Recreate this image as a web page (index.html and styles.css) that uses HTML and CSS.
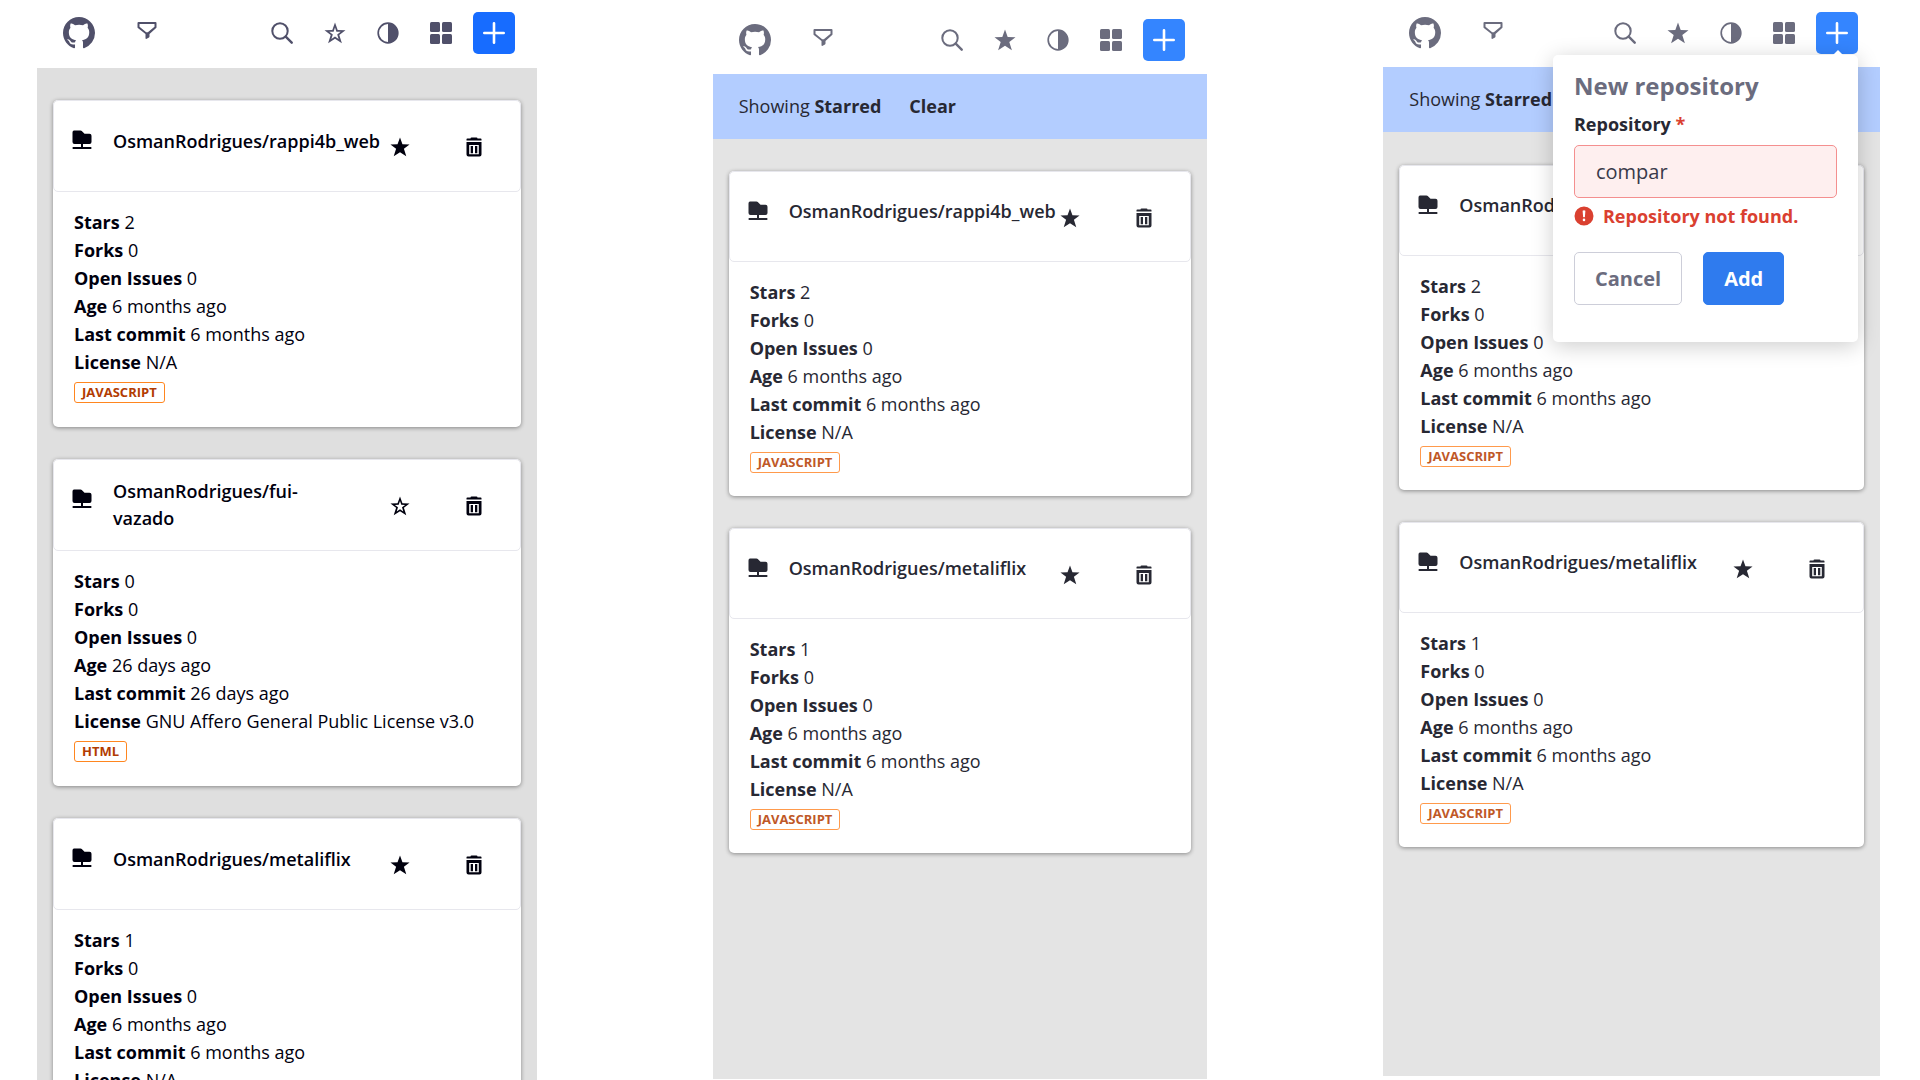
FILE: index.html
```html
<!DOCTYPE html>
<html lang="en">
<head>
<meta charset="utf-8">
<meta name="viewport" content="width=device-width, initial-scale=1">
<title>Repositories</title>
<link rel="stylesheet" href="styles.css">
</head>
<body>
<svg class="sprite" aria-hidden="true">
  <symbol id="github" viewBox="0 0 16 16"><path d="M8 0C3.58 0 0 3.58 0 8c0 3.54 2.29 6.53 5.47 7.59.4.07.55-.17.55-.38 0-.19-.01-.82-.01-1.49-2.01.37-2.53-.49-2.69-.94-.09-.23-.48-.94-.82-1.13-.28-.15-.68-.52-.01-.53.63-.01 1.08.58 1.23.82.72 1.21 1.87.87 2.33.66.07-.52.28-.87.51-1.07-1.78-.2-3.64-.89-3.64-3.95 0-.87.31-1.59.82-2.15-.08-.2-.36-1.02.08-2.12 0 0 .67-.21 2.2.82.64-.18 1.32-.27 2-.27s1.36.09 2 .27c1.53-1.04 2.2-.82 2.2-.82.44 1.1.16 1.92.08 2.12.51.56.82 1.27.82 2.15 0 3.07-1.87 3.75-3.65 3.95.29.25.54.73.54 1.48 0 1.07-.01 1.93-.01 2.2 0 .21.15.46.55.38A8.01 8.01 0 0 0 16 8c0-4.42-3.58-8-8-8z"/></symbol>
  <symbol id="filter" viewBox="0 0 22 22"><path fill-rule="evenodd" d="M1.5 0h17a1 1 0 0 1 1 1v4.200a1 1 0 0 1-.35.750L12.500 12v2.600a1 1 0 0 1-.5.850l-2.300 1.400a.800.800 0 0 1-1.200-.700V12L.850 5.950a1 1 0 0 1-.35-.750V1a1 1 0 0 1 1-1zM2.500 2v2.700L9.200 10.200h1.600l6.700-5.500V2z"/></symbol>
  <symbol id="search" viewBox="0 0 22 22"><circle cx="9" cy="9" r="7.700" fill="none" stroke="currentColor" stroke-width="2"/><path d="M14.700 14.700l6 6" stroke="currentColor" stroke-width="2.400" stroke-linecap="round"/></symbol>
  <symbol id="star" viewBox="0 0 22 22"><path d="M11 .5l2.700 7.500 7.800.2-6.200 4.800 2.600 8.300L11 16.800l-6.900 4.500L6.700 13 .5 8.200 8.300 8z"/></symbol>
  <symbol id="star-o" viewBox="0 0 22 22"><path fill-rule="evenodd" d="M11 .5l2.700 7.500 7.800.2-6.200 4.800 2.600 8.300L11 16.800l-6.900 4.500L6.700 13 .5 8.200 8.300 8zM11 5.500L9.600 9.700l-4.300.1 3.500 2.700-1.400 4.500 3.600-2.400 3.600 2.400-1.400-4.500 3.500-2.700-4.300-.1z"/></symbol>
  <symbol id="contrast" viewBox="0 0 22 22"><circle cx="11" cy="11" r="9.800" fill="none" stroke="currentColor" stroke-width="1.700"/><path d="M11 1.200a9.800 9.800 0 0 1 0 19.600z"/></symbol>
  <symbol id="cards" viewBox="0 0 22 22"><rect width="10" height="10" rx="1.500"/><rect x="12" width="10" height="10" rx="1.500"/><rect y="12" width="10" height="10" rx="1.500"/><rect x="12" y="12" width="10" height="10" rx="1.500"/></symbol>
  <symbol id="plus" viewBox="0 0 22 22"><path d="M11 1.300v19.400M1.300 11h19.400" stroke="currentColor" stroke-width="2.600" stroke-linecap="round"/></symbol>
  <symbol id="repo" viewBox="0 0 20 20"><path d="M2 .5h6.500q.8 0 1.300.5l2.700 2.800h5q2 0 2 2V12q0 2-2 2H11v3h7.800a.7.700 0 0 1 .7.700v.6a.7.700 0 0 1-.7.700H1.200a.7.700 0 0 1-.7-.7v-.6a.7.700 0 0 1 .7-.7H9v-3H2.500q-2 0-2-2V2.500Q.5.500 2 .5z"/></symbol>
  <symbol id="trash" viewBox="0 0 20 20"><path fill-rule="evenodd" d="M6.500 1.500q0-1 1-1h5q1 0 1 1h3.200q.8 0 .8.800V3.500H2.500V2.300q0-.8.800-.8zM2.500 5h15v12.500q0 2-2 2h-11q-2 0-2-2zM5.200 8v9.200h9.600V8z"/><path d="M6.700 9h2.300v7.300H6.700zM11 9h2.300v7.300H11z"/></symbol>
  <symbol id="alert" viewBox="0 0 20 20"><path fill-rule="evenodd" d="M10 .5a9.500 9.500 0 1 1 0 19 9.500 9.500 0 0 1 0-19zM8.600 4.800l.5 6.200q.9.700 1.800 0l.5-6.200q-1.400-.9-2.800 0zM10 12.600a1.300 1.300 0 1 0 0 2.600 1.300 1.300 0 0 0 0-2.600z"/></symbol>
</svg>

<main class="screens">
  <section class="screen screen--dark" aria-label="All repositories">
    <header class="toolbar">
      <a class="brand" href="#" aria-label="GitHub"><svg><use href="#github"/></svg></a>
      <button class="icon-btn filter-btn" aria-label="Filter"><svg><use href="#filter"/></svg></button>
      <div class="tools">
        <button class="icon-btn" aria-label="Search"><svg><use href="#search"/></svg></button>
        <button class="icon-btn" aria-label="Starred"><svg><use href="#star-o"/></svg></button>
        <button class="icon-btn" aria-label="Theme"><svg><use href="#contrast"/></svg></button>
        <button class="icon-btn" aria-label="Cards"><svg><use href="#cards"/></svg></button>
        <button class="icon-btn icon-btn--primary" aria-label="New repository"><svg><use href="#plus"/></svg></button>
      </div>
    </header>
    <div class="list">
      <article class="card">
        <header class="card-head">
          <svg class="repo-icon"><use href="#repo"/></svg>
          <h2 class="card-title">OsmanRodrigues/rappi4b_web</h2>
          <button class="card-btn" aria-label="Unstar"><svg><use href="#star"/></svg></button>
          <button class="card-btn" aria-label="Delete"><svg><use href="#trash"/></svg></button>
        </header>
        <div class="card-body">
          <p><b>Stars</b> 2</p>
          <p><b>Forks</b> 0</p>
          <p><b>Open Issues</b> 0</p>
          <p><b>Age</b> 6 months ago</p>
          <p><b>Last commit</b> 6 months ago</p>
          <p><b>License</b> N/A</p>
          <span class="tag">JAVASCRIPT</span>
        </div>
      </article>
      <article class="card">
        <header class="card-head">
          <svg class="repo-icon"><use href="#repo"/></svg>
          <h2 class="card-title card-title--long">OsmanRodrigues/fui-vazado</h2>
          <button class="card-btn" aria-label="Star"><svg><use href="#star-o"/></svg></button>
          <button class="card-btn" aria-label="Delete"><svg><use href="#trash"/></svg></button>
        </header>
        <div class="card-body">
          <p><b>Stars</b> 0</p>
          <p><b>Forks</b> 0</p>
          <p><b>Open Issues</b> 0</p>
          <p><b>Age</b> 26 days ago</p>
          <p><b>Last commit</b> 26 days ago</p>
          <p><b>License</b> GNU Affero General Public License v3.0</p>
          <span class="tag">HTML</span>
        </div>
      </article>
      <article class="card">
        <header class="card-head">
          <svg class="repo-icon"><use href="#repo"/></svg>
          <h2 class="card-title">OsmanRodrigues/metaliflix</h2>
          <button class="card-btn" aria-label="Unstar"><svg><use href="#star"/></svg></button>
          <button class="card-btn" aria-label="Delete"><svg><use href="#trash"/></svg></button>
        </header>
        <div class="card-body">
          <p><b>Stars</b> 1</p>
          <p><b>Forks</b> 0</p>
          <p><b>Open Issues</b> 0</p>
          <p><b>Age</b> 6 months ago</p>
          <p><b>Last commit</b> 6 months ago</p>
          <p><b>License</b> N/A</p>
          <span class="tag">JAVASCRIPT</span>
        </div>
      </article>
    </div>
  </section>

  <section class="screen screen--starred" aria-label="Starred repositories">
    <header class="toolbar">
      <a class="brand" href="#" aria-label="GitHub"><svg><use href="#github"/></svg></a>
      <button class="icon-btn filter-btn" aria-label="Filter"><svg><use href="#filter"/></svg></button>
      <div class="tools">
        <button class="icon-btn" aria-label="Search"><svg><use href="#search"/></svg></button>
        <button class="icon-btn" aria-label="Starred"><svg><use href="#star"/></svg></button>
        <button class="icon-btn" aria-label="Theme"><svg><use href="#contrast"/></svg></button>
        <button class="icon-btn" aria-label="Cards"><svg><use href="#cards"/></svg></button>
        <button class="icon-btn icon-btn--primary" aria-label="New repository"><svg><use href="#plus"/></svg></button>
      </div>
    </header>
    <div class="banner"><span>Showing <b>Starred</b></span><button class="clear-btn">Clear</button></div>
    <div class="list">
      <article class="card">
        <header class="card-head">
          <svg class="repo-icon"><use href="#repo"/></svg>
          <h2 class="card-title">OsmanRodrigues/rappi4b_web</h2>
          <button class="card-btn" aria-label="Unstar"><svg><use href="#star"/></svg></button>
          <button class="card-btn" aria-label="Delete"><svg><use href="#trash"/></svg></button>
        </header>
        <div class="card-body">
          <p><b>Stars</b> 2</p>
          <p><b>Forks</b> 0</p>
          <p><b>Open Issues</b> 0</p>
          <p><b>Age</b> 6 months ago</p>
          <p><b>Last commit</b> 6 months ago</p>
          <p><b>License</b> N/A</p>
          <span class="tag">JAVASCRIPT</span>
        </div>
      </article>
      <article class="card">
        <header class="card-head">
          <svg class="repo-icon"><use href="#repo"/></svg>
          <h2 class="card-title">OsmanRodrigues/metaliflix</h2>
          <button class="card-btn" aria-label="Unstar"><svg><use href="#star"/></svg></button>
          <button class="card-btn" aria-label="Delete"><svg><use href="#trash"/></svg></button>
        </header>
        <div class="card-body">
          <p><b>Stars</b> 1</p>
          <p><b>Forks</b> 0</p>
          <p><b>Open Issues</b> 0</p>
          <p><b>Age</b> 6 months ago</p>
          <p><b>Last commit</b> 6 months ago</p>
          <p><b>License</b> N/A</p>
          <span class="tag">JAVASCRIPT</span>
        </div>
      </article>
    </div>
  </section>

  <section class="screen screen--adding" aria-label="Add a repository">
    <header class="toolbar">
      <a class="brand" href="#" aria-label="GitHub"><svg><use href="#github"/></svg></a>
      <button class="icon-btn filter-btn" aria-label="Filter"><svg><use href="#filter"/></svg></button>
      <div class="tools">
        <button class="icon-btn" aria-label="Search"><svg><use href="#search"/></svg></button>
        <button class="icon-btn" aria-label="Starred"><svg><use href="#star"/></svg></button>
        <button class="icon-btn" aria-label="Theme"><svg><use href="#contrast"/></svg></button>
        <button class="icon-btn" aria-label="Cards"><svg><use href="#cards"/></svg></button>
        <button class="icon-btn icon-btn--primary" aria-label="New repository"><svg><use href="#plus"/></svg></button>
      </div>
      <form class="popover">
        <h2 class="popover-title">New repository</h2>
        <label class="field-label" for="repository">Repository <span class="required">*</span></label>
        <input class="field" id="repository" type="text" value="compar">
        <p class="error"><svg><use href="#alert"/></svg>Repository not found.</p>
        <div class="actions">
          <button class="btn" type="button">Cancel</button>
          <button class="btn btn--primary" type="button">Add</button>
        </div>
      </form>
    </header>
    <div class="banner"><span>Showing <b>Starred</b></span></div>
    <div class="list">
      <article class="card">
        <header class="card-head">
          <svg class="repo-icon"><use href="#repo"/></svg>
          <h2 class="card-title">OsmanRodrigues/rappi4b_web</h2>
          <button class="card-btn" aria-label="Unstar"><svg><use href="#star"/></svg></button>
          <button class="card-btn" aria-label="Delete"><svg><use href="#trash"/></svg></button>
        </header>
        <div class="card-body">
          <p><b>Stars</b> 2</p>
          <p><b>Forks</b> 0</p>
          <p><b>Open Issues</b> 0</p>
          <p><b>Age</b> 6 months ago</p>
          <p><b>Last commit</b> 6 months ago</p>
          <p><b>License</b> N/A</p>
          <span class="tag">JAVASCRIPT</span>
        </div>
      </article>
      <article class="card">
        <header class="card-head">
          <svg class="repo-icon"><use href="#repo"/></svg>
          <h2 class="card-title">OsmanRodrigues/metaliflix</h2>
          <button class="card-btn" aria-label="Unstar"><svg><use href="#star"/></svg></button>
          <button class="card-btn" aria-label="Delete"><svg><use href="#trash"/></svg></button>
        </header>
        <div class="card-body">
          <p><b>Stars</b> 1</p>
          <p><b>Forks</b> 0</p>
          <p><b>Open Issues</b> 0</p>
          <p><b>Age</b> 6 months ago</p>
          <p><b>Last commit</b> 6 months ago</p>
          <p><b>License</b> N/A</p>
          <span class="tag">JAVASCRIPT</span>
        </div>
      </article>
    </div>
  </section>
</main>
</body>
</html>
```
FILE: styles.css
```css
* {
  box-sizing: border-box;
  margin: 0;
  padding: 0;
}

body {
  background: #fff;
  font-family: "Open Sans", "Noto Sans", sans-serif;
  font-size: 18px;
  line-height: 28px;
}

b {
  font-weight: 700;
}

button {
  font: inherit;
  color: inherit;
  background: none;
  border: 0;
  cursor: pointer;
}

svg {
  display: block;
  fill: currentColor;
}

.sprite {
  position: absolute;
  width: 0;
  height: 0;
}

.screens {
  display: grid;
  grid-template-columns: 500fr 495fr 497fr;
  column-gap: 176px;
  padding: 0 40px 0 37px;
  height: 100vh;
}

/* One app screen: fixed toolbar on top, scrolling list below */
.screen {
  --text: #272833;
  --muted: #6b6c7e;
  --primary: #3485ff;
  --surface: #e4e4e4;
  --tag: #bf5827;
  --tag-line: #ff9a4c;
  --head: 91px;
  --body-end: 23px;
  display: flex;
  flex-direction: column;
  min-width: 0;
  min-height: 0;
  color: var(--text);
}

.screen--dark {
  --text: #00000e;
  --muted: #50506a;
  --primary: #176cff;
  --surface: #dfdfdf;
  --tag: #b23c02;
  --tag-line: #ff861f;
  --head: 92px;
  --body-end: 24px;
}

.screen--starred {
  padding-bottom: 1px;
}

.screen--adding {
  padding-bottom: 4px;
}

.toolbar {
  position: relative;
  display: flex;
  align-items: center;
  padding: 12px 22px 14px 26px;
  color: var(--muted);
}

.screen--starred .toolbar {
  padding-top: 19px;
  padding-bottom: 13px;
}

.screen--adding .toolbar {
  padding-bottom: 13px;
}

.brand {
  color: inherit;
}

.brand svg {
  width: 32px;
  height: 32px;
}

.icon-btn {
  display: grid;
  place-items: center;
  width: 42px;
  height: 42px;
  border-radius: 5px;
}

.icon-btn svg {
  width: 22px;
  height: 22px;
}

.icon-btn--primary {
  background: var(--primary);
  color: #fff;
}

.filter-btn {
  margin-left: 32px;
}

.tools {
  display: flex;
  gap: 11px;
  margin-left: auto;
}

.banner {
  display: flex;
  align-items: center;
  gap: 28px;
  padding: 18px 26px 19px;
  background: #b3cdff;
}

.clear-btn {
  font-weight: 700;
}

.list {
  flex: 1;
  display: flex;
  flex-direction: column;
  gap: 32px;
  min-height: 0;
  padding: 32px 16px;
  overflow-y: auto;
  scrollbar-width: none;
  background: var(--surface);
}

.screen--adding .list {
  padding-top: 33px;
}

.card {
  flex: none;
  background: #fff;
  border-radius: 5px;
  box-shadow: 0 1px 4px rgba(0, 0, 0, 0.4);
}

.card-head {
  display: flex;
  align-items: center;
  height: var(--head);
  padding: 2px 25px 0 18px;
  border: 1px solid #e7e7ed;
  border-radius: 5px;
}

.repo-icon {
  flex: none;
  width: 20px;
  height: 20px;
  margin-right: 21px;
  margin-bottom: 14px;
}

.card-title {
  flex: 1;
  min-width: 0;
  margin-right: 24px;
  padding-bottom: 12px;
  font-size: 18px;
  font-weight: 600;
  line-height: 27px;
}

.card-title--long {
  padding-bottom: 2px;
}

.card-btn {
  flex: none;
  display: grid;
  place-items: center;
  width: 42px;
  height: 42px;
}

.card-btn + .card-btn {
  margin-left: 32px;
}

.card-btn svg {
  width: 20px;
  height: 20px;
}

.card-body {
  padding: 16px 21px var(--body-end);
}

.tag {
  display: block;
  width: fit-content;
  margin-top: 6px;
  padding: 0 7px;
  border: 1px solid var(--tag-line);
  border-radius: 3px;
  color: var(--tag);
  font-size: 13px;
  font-weight: 700;
  line-height: 19px;
}

.popover {
  position: absolute;
  z-index: 1;
  top: 55px;
  right: 22px;
  width: 305px;
  padding: 15px 21px 37px;
  background: #fff;
  border-radius: 5px;
  box-shadow: 0 4px 22px rgba(0, 0, 0, 0.2);
}

.popover::before {
  content: "";
  position: absolute;
  top: -5px;
  right: 15px;
  border: 5px solid transparent;
  border-top: 0;
  border-bottom-color: #fff;
}

.popover-title {
  font-size: 24px;
  font-weight: 700;
  line-height: 32px;
}

.field-label {
  display: block;
  margin: 8px 0 7px;
  color: var(--text);
  font-weight: 700;
}

.required {
  color: #da4030;
}

.field {
  display: block;
  width: 100%;
  height: 53px;
  padding: 0 21px;
  border: 1px solid #f48f8f;
  border-radius: 5px;
  background: #feefef;
  color: #393a4a;
  font: inherit;
  font-size: 20px;
}

.error {
  display: flex;
  align-items: center;
  gap: 9px;
  margin-top: 4px;
  color: #da4030;
  font-weight: 700;
}

.error svg {
  width: 20px;
  height: 20px;
}

.actions {
  display: flex;
  gap: 21px;
  margin-top: 22px;
}

.btn {
  height: 53px;
  padding: 0 20px;
  border: 1px solid #cdced9;
  border-radius: 5px;
  font-size: 20px;
  font-weight: 700;
}

.btn--primary {
  border-color: #2f7bee;
  background: #2f7bee;
  color: #fff;
}
```
